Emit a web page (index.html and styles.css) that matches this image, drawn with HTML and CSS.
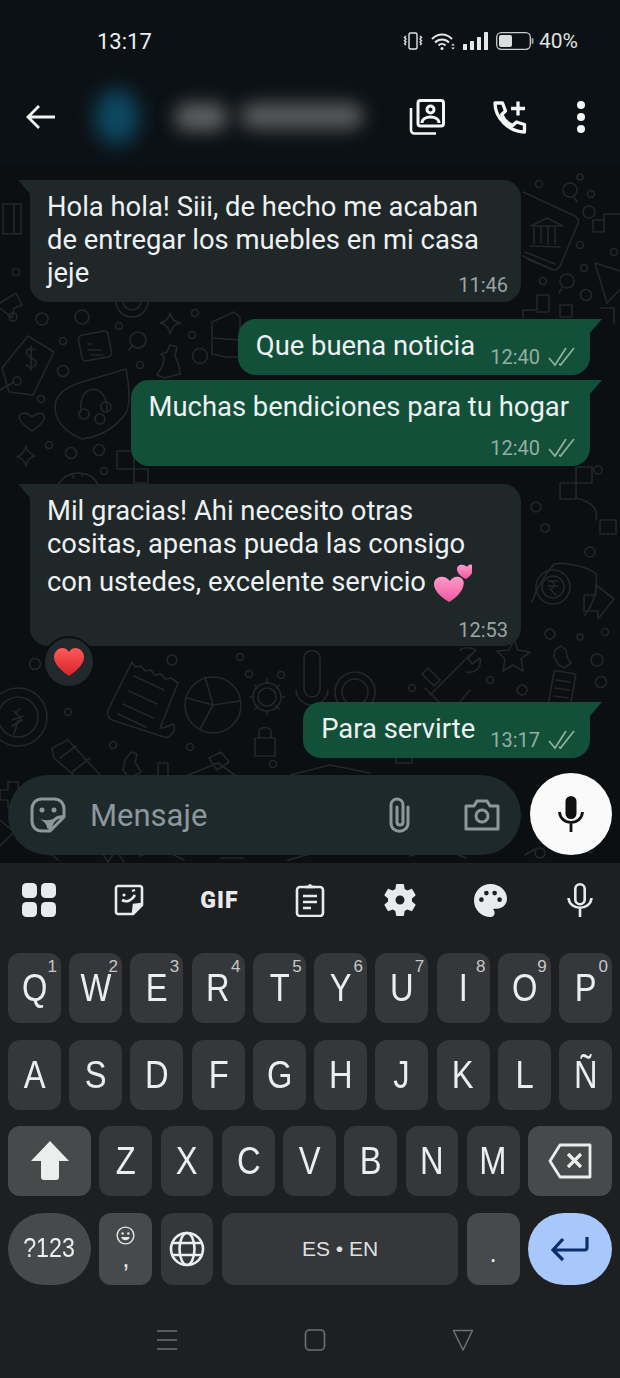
FILE: index.html
```html
<!DOCTYPE html>
<html lang="es">
<head>
    <meta charset="UTF-8">
    <meta name="viewport" content="width=device-width, initial-scale=1.0">
    <title>WhatsApp chat</title>
    <link rel="stylesheet" href="styles.css">
</head>
<body>
<div class="phone">
    <header class="top">
        <div class="status">
            <span class="clock">13:17</span>
            <div class="status-icons">
                <svg class="ic-vib" viewBox="0 0 20 18" fill="none" stroke="#e4e6e7" stroke-width="1.4"><rect x="6" y="1" width="8" height="16" rx="1.5"/><path d="M3 4l-1.500 1.500 1.500 1.500-1.500 1.500 1.500 1.500-1.500 1.500 1.500 1.500M17 4l1.500 1.500-1.500 1.500 1.500 1.500-1.500 1.500 1.500 1.500-1.500 1.500"/></svg>
                <svg class="ic-wifi" viewBox="0 0 25 17" fill="none" stroke="#e4e6e7" stroke-width="2"><path d="M1 6c6-6 14-6 20 0M4 9.500c4-4 10-4 14 0M7.500 12.500c2-2 5-2 7 0"/><circle cx="11" cy="15.500" r="1.500" fill="#e4e6e7" stroke="none"/><path d="M22 10.500l1.800 2h-3.600zM22 16.500l1.800-2h-3.600z" fill="#e4e6e7" stroke="none"/></svg>
                <svg class="ic-signal" viewBox="0 0 25 18" fill="#e4e6e7"><rect x="0" y="12" width="4" height="6" rx=".6"/><rect x="7" y="9" width="4" height="9" rx=".6"/><rect x="14" y="5" width="4" height="13" rx=".6"/><rect x="21" y="0" width="4" height="18" rx=".6"/></svg>
                <svg class="ic-batt" viewBox="0 0 38 18"><rect x=".7" y=".7" width="33.600" height="16.600" rx="4.500" fill="none" stroke="#c9cbcc" stroke-width="1.300"/><rect x="3" y="3" width="13" height="12" rx="2" fill="#dcdddd"/><rect x="35.500" y="6" width="2" height="6" rx="1" fill="#9a9c9d"/></svg>
                <span class="pct">40%</span>
            </div>
        </div>
        <div class="appbar">
            <svg class="ic-back" viewBox="0 0 30 26" fill="none" stroke="#f2f3f3" stroke-width="2.800"><path d="M13 2L2 13l11 11M2 13h27"/></svg>
            <div class="avatar"></div>
            <div class="contact-name"><span class="blur-a"></span><span class="blur-b"></span></div>
            <div class="app-actions">
                <svg class="ic-contacts" viewBox="0 0 36 36" fill="none" stroke="#f4f5f5" stroke-width="3"><rect x="9" y="1.500" width="25.500" height="25.500" rx="2.500"/><circle cx="21.500" cy="10.500" r="3.500"/><path d="M13 24c0-8 17-8 17 0"/><path d="M2 9v22c0 2 1.500 3.500 3.500 3.500H27" stroke-width="2.600"/></svg>
                <svg class="ic-addcall" viewBox="0 0 34 34" fill="none" stroke="#f4f5f5" stroke-width="3.300" stroke-linejoin="round"><path d="M2 3h7.500l3 8-3.800 3.500c2 5 6 9 11 11l3.800-3.500 8 2.500V32C16 32 2 18 2 3z"/><path d="M25 1.500v14M18 8.500h14"/></svg>
                <svg class="ic-dots" viewBox="0 0 10 34" fill="#f4f5f5"><circle cx="5" cy="5" r="4"/><circle cx="5" cy="17" r="4"/><circle cx="5" cy="29" r="4"/></svg>
            </div>
        </div>
    </header>

    <main class="chat">
        <svg class="doodles" viewBox="0 165 620 698" fill="none" stroke="#23272a" stroke-width="1.600" stroke-linecap="round" stroke-linejoin="round" aria-hidden="true">
            <!-- left column, top -->
            <path d="M0 303l16-10 6 12-8 3-2 10-12-10"/>
            <path d="M3 204h18v30H3zM14 204v30"/>
            <circle cx="16" cy="272" r="3.500"/><circle cx="13" cy="317" r="4"/><circle cx="42" cy="319" r="6"/><circle cx="82" cy="317" r="7"/><circle cx="119" cy="326" r="3.500"/>
            <circle cx="63" cy="341" r="3.500"/><circle cx="63" cy="371" r="5.500"/><circle cx="140" cy="365" r="3.500"/><circle cx="192" cy="335" r="3.500"/><circle cx="195" cy="313" r="3.500"/><circle cx="200" cy="356" r="7.500"/>
            <circle cx="41" cy="399" r="3.500"/><circle cx="49" cy="445" r="3.500"/><circle cx="71" cy="453" r="5.500"/><circle cx="99" cy="450" r="5.500"/><circle cx="104" cy="471" r="3.500"/>
            <circle cx="132" cy="301" r="16"/><circle cx="132" cy="301" r="9"/>
            <!-- price tag -->
            <path d="M2 368l26-32 26 16-21 43-24-3z"/><circle cx="17" cy="381" r="4"/><path d="M0 390l14-8"/>
            <path d="M35 350c-6-3-10 0-8 4 2 5 9 4 9 9 0 5-6 5-10 2M31 346v24"/>
            <!-- note, magnifier, star, chess piece -->
            <rect x="80" y="333" width="30" height="26" rx="4" transform="rotate(-11 95 346)"/><path d="M88 344h4M88 350h14M91 355h12"/>
            <circle cx="138" cy="340" r="8"/><path d="M132 346l-3 4"/>
            <path d="M170 313c1 6 4 9 11 10-6 1-10 5-11 11-1-6-4-10-10-11 6-1 9-4 10-10z"/>
            <path d="M170 345l7 2-2 9 4 10 1 8-16 4-7-3 6-10 1-8-3-3 6-2z"/>
            <path d="M212 322l22-10 6 5v40l-14 0-14-3zM212 338l28 2"/>
            <!-- headset bubble -->
            <path d="M126 369L82 382C62 388 54 398 55 410c2 14 14 24 27 29 20-2 36-14 44-26 5-10 3-28 0-44z"/>
            <path d="M81 412c-4-30 28-30 26 0"/><circle cx="84" cy="414" r="5"/><circle cx="106" cy="407" r="5"/><circle cx="100" cy="419" r="5"/>
            <path d="M32 431c-12-8-15-14-11-17 4-2 8 0 11 3 3-3 8-5 11-3 3 4 0 10-11 17z"/>
            <path d="M26 446c1 5 3 7 9 10-5 1-8 5-9 10-1-5-4-8-9-9 5-2 8-6 9-11z"/>
            <path d="M117 451h17v18h-17zM134 469h14v14h-14zM134 469v-6"/>
            <path d="M58 485c8-16 34-16 40 0M72 475l2 3M82 473v3"/>
            <!-- right edge -->
            <path d="M523 192l52 24c4 3 4 7 2 10l-17 40c-2 4-6 5-9 3l-28-13"/>
            <path d="M531 226l16-8 16 8zM534 228v16M541 227v16M548 227v17M555 227v17M530 246l30 1M525 252l30 12M527 259l24 10"/>
            <circle cx="570" cy="190" r="7"/><path d="M574 197l3 5"/><circle cx="539" cy="184" r="3.500"/><circle cx="591" cy="194" r="3.500"/><circle cx="589" cy="212" r="6"/><circle cx="580" cy="177" r="3"/>
            <circle cx="580" cy="245" r="3.500"/><circle cx="584" cy="268" r="3.500"/><circle cx="614" cy="252" r="3.500"/>
            <path d="M593 232h11v-18h16M593 232v-12h11"/>
            <circle cx="567" cy="281" r="7"/><path d="M562 288l-3 5"/><circle cx="543" cy="281" r="3.500"/><circle cx="586" cy="295" r="5.500"/>
            <path d="M595 263l25 8M595 263l12 40 13-14"/>
            <path d="M523 310h14v-15h12v17h-12M523 310v8M560 305h12v12h-12zM600 308h14v16"/>
            <path d="M560 483h16v-16h16v16h-16v16h-16z"/>
            <circle cx="536" cy="507" r="5"/><circle cx="598" cy="470" r="4"/><circle cx="545" cy="528" r="4"/><circle cx="590" cy="552" r="5"/>
            <path d="M576 498c16 4 22 10 20 22M600 520h16v14h-16z"/>
            <path d="M532 602c4-12 12-26 22-38 10-2 34 2 42 10 2 14-2 30-12 42"/>
            <circle cx="553" cy="587" r="17"/><circle cx="553" cy="587" r="11"/><path d="M548 581h10M548 586h10M550 581c6 2 6 6 0 8l6 6"/>
            <path d="M596 585l18 14-16 20v-8h-14v-16h12z"/>
            <circle cx="550" cy="634" r="5"/><circle cx="597" cy="660" r="6"/><circle cx="580" cy="637" r="3"/><circle cx="605" cy="632" r="3.500"/>
            <path d="M514 640l4 10 12 2-9 7 2 12-10-6-10 6 2-12-8-8 12-1z"/>
            <path d="M555 650l6-4 5 4 1 7 4 6-7 5-6-4-4-7z"/>
            <rect x="551" y="672" width="22" height="34" rx="2" transform="rotate(10 562 690)"/><path d="M556 680l14 2M555 688l14 2M554 696l14 2"/>
            <circle cx="490" cy="680" r="3.500"/><circle cx="522" cy="690" r="5"/><circle cx="601" cy="682" r="5.500"/>
            <!-- bottom left -->
            <circle cx="18" cy="717" r="29"/><circle cx="18" cy="717" r="20"/><path d="M15 713l5-4M14 711l8 9M12 720l11-4M12 726l10-6M14 734l4-14"/>
            <path d="M132 662l3 5 6-1 4 5 6-1 4 5 6-1 4 5 6-1 7 5-18 45c8 0 14-6 14-3 2 6-4 14-10 12L112 720c-4-2-5-6-4-10z"/>
            <path d="M134 676l30 14M129 691l28 13M123 704l30 14M118 714l28 13"/>
            <circle cx="213" cy="705" r="28"/><path d="M205 677l8 28 27-4M213 705l-26-7M213 705l-13 24"/>
            <circle cx="267" cy="697" r="9"/><circle cx="267" cy="697" r="14"/><path d="M267 679v4M267 711v4M250 697h3M281 697h4M255 685l3 3M276 706l3 3M279 685l-3 3M258 706l-3 3"/>
            <path d="M255 738h20v18h-20zM259 738v-6c0-6 12-6 12 0v6"/>
            <circle cx="35" cy="664" r="5.500"/><circle cx="172" cy="660" r="5"/><circle cx="240" cy="657" r="3.500"/><circle cx="249" cy="674" r="3.500"/><circle cx="281" cy="675" r="3.500"/>
            <circle cx="68" cy="712" r="3.500"/><circle cx="113" cy="745" r="3.500"/><circle cx="190" cy="747" r="3.500"/><circle cx="273" cy="764" r="3.500"/>
            <path d="M52 748l16-8 44 48-12 10-46-40zM60 758l16-12M72 772l18-14"/>
            <path d="M125 760l6-8 6 2-2 8 6 10-12 6-6-8z"/>
            <path d="M158 763h10v14h-10zM209 758l12-6 8 10-12 8zM188 775l30-12 28 20"/>
            <path d="M304 658v30c0 12 16 12 16 0v-30c0-10-16-10-16 0zM296 690c2 20 30 20 32 0M312 705v8"/>
            <circle cx="355" cy="692" r="20"/><circle cx="355" cy="692" r="13"/>
            <path d="M430 695l40-40M425 688l14 14M460 650c6-4 12-2 16 0l-8 8 4 6 8-6c2 8-4 16-14 14M428 668l12 12-6 6-12-12zM470 690l-12 14"/>
            <path d="M396 745h16v18h-16zM290 775l40-10 40 8"/>
            <circle cx="412" cy="688" r="3.500"/><circle cx="480" cy="708" r="3.500"/>
            <path d="M0 790h8v-8h10v8h8v10h-8v8H8v-8H0z"/>
            <path d="M0 820l14 12-14 14M44 848l14 12M100 850l8 12 8-12 8 12M140 856l20-8 24 12M220 858h24M288 860l30-8M410 856l30-8 26 10"/>
            <path d="M540 848a5 5 0 1 0 .1 0M525 855l10-6M546 845l16-8 30 16"/>
        </svg>

        <div class="bubble in first">
            <p class="msg">Hola hola! Siii, de hecho me acaban de entregar los muebles en mi casa</p>
            <div class="tail-line">
                <p class="msg">jeje</p>
                <div class="meta"><span class="time">11:46</span></div>
            </div>
        </div>

        <div class="bubble out gap-lg row">
            <p class="msg">Que buena noticia</p>
            <div class="meta"><span class="time">12:40</span><svg class="checks" viewBox="0 0 27 20" fill="none" stroke="#93aea3" stroke-width="1.700"><path d="M1 11l6 7L18 1M11 17l1.500 1L26 1"/></svg></div>
        </div>

        <div class="bubble out wide">
            <p class="msg">Muchas bendiciones para tu hogar</p>
            <div class="meta"><span class="time">12:40</span><svg class="checks" viewBox="0 0 27 20" fill="none" stroke="#93aea3" stroke-width="1.700"><path d="M1 11l6 7L18 1M11 17l1.500 1L26 1"/></svg></div>
        </div>

        <div class="bubble in thanks">
            <p class="msg">Mil gracias! Ahi necesito otras cositas, apenas pueda las consigo con ustedes, excelente servicio <svg class="hearts" viewBox="0 0 40 42"><defs><linearGradient id="pink" x1="0" y1="0" x2="0" y2="1"><stop offset="0" stop-color="#ff9ccb"/><stop offset="1" stop-color="#f2559f"/></linearGradient></defs><path d="M16 41C6 35 1 29 1 23c0-5 5-8 9-7 3 0 5 2 7 4 2-3 5-5 9-4 4 1 6 5 4 10-2 6-7 11-14 15z" fill="url(#pink)"/><path d="M33 18c-5-2-9-6-9-10 0-3 3-5 6-4 2 0 3 1 4 2 1-2 3-3 5-2v8c-1 2-3 4-6 6z" fill="url(#pink)"/></svg></p>
            <div class="meta"><span class="time">12:53</span></div>
            <div class="reaction"><svg viewBox="0 0 30 28"><defs><linearGradient id="red" x1="0" y1="0" x2="0" y2="1"><stop offset="0" stop-color="#ff5a5a"/><stop offset="1" stop-color="#d9222a"/></linearGradient></defs><path d="M15 28C5 21 0 15 0 9c0-5 4-9 8.500-9C11 0 13.500 1.500 15 4c1.500-2.500 4-4 6.500-4C26 0 30 4 30 9c0 6-5 12-15 19z" fill="url(#red)"/></svg></div>
        </div>

        <div class="bubble out last row">
            <p class="msg">Para servirte</p>
            <div class="meta"><span class="time">13:17</span><svg class="checks" viewBox="0 0 27 20" fill="none" stroke="#93aea3" stroke-width="1.700"><path d="M1 11l6 7L18 1M11 17l1.500 1L26 1"/></svg></div>
        </div>

        <div class="composer">
            <div class="input">
                <svg class="ic-sticker" viewBox="0 0 36 36" fill="none" stroke="#8d989c" stroke-width="3"><path d="M12 2h12c6 0 10 4 10 10v8L20 34h-8C6 34 2 30 2 24V12C2 6 6 2 12 2z"/><path d="M34 20c-8-1-13 4-14 14"/><circle cx="12" cy="13" r="2.500" fill="#8d989c" stroke="none"/><circle cx="24" cy="13" r="2.500" fill="#8d989c" stroke="none"/><path d="M7 21c6 3 14 3 22-1-3 2-5 4-8 6l-2 6-2-1c0-4-4-8-10-10z" fill="#8d989c" stroke="none"/></svg>
                <span class="placeholder">Mensaje</span>
                <svg class="ic-clip" viewBox="0 0 28 36" fill="none" stroke="#8d989c" stroke-width="3" stroke-linecap="round"><path d="M24 10v16c0 11-17 11-17 0V8c0-8 12-8 12 0v17c0 4-6 4-6 0V10"/></svg>
                <svg class="ic-cam" viewBox="0 0 36 32" fill="none" stroke="#8d989c" stroke-width="3"><path d="M2 7h8l3-5h10l3 5h8v23H2z" stroke-linejoin="round"/><circle cx="18" cy="17" r="6"/></svg>
            </div>
            <div class="mic-btn"><svg viewBox="0 0 26 36"><rect x="7.500" y="0" width="11" height="23" rx="5.500" fill="#111"/><path d="M1.500 16c1 14 22 14 23 0M13 28v8" fill="none" stroke="#111" stroke-width="2.800"/></svg></div>
        </div>
    </main>

    <section class="keyboard">
        <div class="toolbar">
            <svg class="tool-grid" viewBox="0 0 34 34" fill="#e9eaeb"><rect width="15" height="15" rx="4.500"/><rect x="19" width="15" height="15" rx="4.500"/><rect y="19" width="15" height="15" rx="4.500"/><rect x="19" y="19" width="15" height="15" rx="4.500"/></svg>
            <svg class="tool-sticker" viewBox="0 0 30 32" fill="none" stroke="#e9eaeb" stroke-width="2.600"><path d="M4 2h22c1 0 2 1 2 2v17l-9 9H4c-1 0-2-1-2-2V4c0-1 1-2 2-2z" stroke-linejoin="round"/><path d="M28 20l-8 1-1 9" fill="#e9eaeb"/><path d="M8 16c5 3 10 0 13-5" stroke-width="2.800"/><circle cx="10" cy="11" r="1.600" fill="#e9eaeb" stroke="none"/><path d="M18 7l3-1" stroke-width="2"/></svg>
            <span class="tool-gif">GIF</span>
            <svg class="tool-clip" viewBox="0 0 30 34" fill="none" stroke="#e9eaeb" stroke-width="2.600"><rect x="2" y="4" width="26" height="29" rx="3"/><path d="M10 4h10M8 13h14M8 19h14M8 25h8"/><circle cx="15" cy="2.800" r="1.800" fill="#e9eaeb" stroke="none"/></svg>
            <svg class="tool-gear" viewBox="2 2 20 20" fill="#e9eaeb"><path d="M19.430 12.980c.04-.32.07-.64.07-.98s-.03-.66-.07-.98l2.110-1.650c.19-.15.24-.42.12-.64l-2-3.460c-.12-.22-.39-.3-.61-.22l-2.490 1c-.52-.4-1.080-.73-1.690-.98l-.38-2.650C14.460 2.180 14.250 2 14 2h-4c-.25 0-.46.18-.49.42l-.38 2.650c-.61.25-1.170.59-1.690.98l-2.490-1c-.23-.09-.49 0-.61.22l-2 3.460c-.13.22-.07.49.12.64l2.110 1.650c-.04.32-.07.65-.07.98s.03.66.07.98l-2.110 1.650c-.19.15-.24.42-.12.64l2 3.460c.12.22.39.3.61.22l2.490-1c.52.4 1.080.73 1.690.98l.38 2.650c.03.24.24.42.49.42h4c.25 0 .46-.18.49-.42l.38-2.650c.61-.25 1.170-.59 1.690-.98l2.490 1c.23.09.49 0 .61-.22l2-3.460c.12-.22.07-.49-.12-.64l-2.110-1.650zM12 14.800c-1.550 0-2.800-1.250-2.800-2.800s1.250-2.800 2.800-2.800 2.800 1.250 2.800 2.800-1.250 2.800-2.800 2.800z" fill-rule="evenodd"/></svg>
            <svg class="tool-palette" viewBox="2 2 20 20"><path d="M12 2C6.490 2 2 6.490 2 12s4.490 10 10 10c1.380 0 2.500-1.120 2.500-2.500 0-.61-.23-1.200-.64-1.670-.08-.1-.13-.21-.13-.33 0-.28.22-.5.5-.5H16c3.310 0 6-2.690 6-6 0-4.960-4.490-9-10-9z" fill="#e9eaeb"/><circle cx="6.500" cy="11.500" r="1.400" fill="#1e1f21"/><circle cx="9.500" cy="7.500" r="1.400" fill="#1e1f21"/><circle cx="14.500" cy="7.500" r="1.400" fill="#1e1f21"/><circle cx="17.500" cy="11.500" r="1.400" fill="#1e1f21"/></svg>
            <svg class="tool-mic" viewBox="0 0 26 34" fill="none" stroke="#e9eaeb" stroke-width="2.600"><rect x="8.300" y="1.300" width="9.400" height="20" rx="4.700"/><path d="M1.500 15c1 13 22 13 23 0M13 26v8"/></svg>
        </div>

        <div class="key-row ten">
            <button class="key"><span class="lbl">Q</span><sup class="num">1</sup></button>
            <button class="key"><span class="lbl">W</span><sup class="num">2</sup></button>
            <button class="key"><span class="lbl">E</span><sup class="num">3</sup></button>
            <button class="key"><span class="lbl">R</span><sup class="num">4</sup></button>
            <button class="key"><span class="lbl">T</span><sup class="num">5</sup></button>
            <button class="key"><span class="lbl">Y</span><sup class="num">6</sup></button>
            <button class="key"><span class="lbl">U</span><sup class="num">7</sup></button>
            <button class="key"><span class="lbl">I</span><sup class="num">8</sup></button>
            <button class="key"><span class="lbl">O</span><sup class="num">9</sup></button>
            <button class="key"><span class="lbl">P</span><sup class="num">0</sup></button>
        </div>
        <div class="key-row ten">
            <button class="key"><span class="lbl">A</span></button>
            <button class="key"><span class="lbl">S</span></button>
            <button class="key"><span class="lbl">D</span></button>
            <button class="key"><span class="lbl">F</span></button>
            <button class="key"><span class="lbl">G</span></button>
            <button class="key"><span class="lbl">H</span></button>
            <button class="key"><span class="lbl">J</span></button>
            <button class="key"><span class="lbl">K</span></button>
            <button class="key"><span class="lbl">L</span></button>
            <button class="key"><span class="lbl">Ñ</span></button>
        </div>
        <div class="key-row third">
            <button class="key mod"><svg class="ic-shift" viewBox="0 0 38 40" fill="#eceded"><path d="M19 0l19 20H28v16c0 2-1 3-3 3H13c-2 0-3-1-3-3V20H0z"/></svg></button>
            <button class="key"><span class="lbl">Z</span></button>
            <button class="key"><span class="lbl">X</span></button>
            <button class="key"><span class="lbl">C</span></button>
            <button class="key"><span class="lbl">V</span></button>
            <button class="key"><span class="lbl">B</span></button>
            <button class="key"><span class="lbl">N</span></button>
            <button class="key"><span class="lbl">M</span></button>
            <button class="key mod"><svg class="ic-del" viewBox="0 0 44 36" fill="none" stroke="#eceded" stroke-width="2.800" stroke-linejoin="round"><path d="M12 2h30v32H12L2 18z"/><path d="M20 11l13 13M33 11L20 24" stroke-width="3.200"/></svg></button>
        </div>
        <div class="key-row bottom">
            <button class="key mod pill"><span class="sym">?123</span></button>
            <button class="key mod comma"><svg class="ic-smile" viewBox="0 0 20 20" fill="none" stroke="#e4e5e5" stroke-width="1.500"><circle cx="10" cy="10" r="8.800"/><circle cx="7" cy="8" r="1.300" fill="#e4e5e5" stroke="none"/><circle cx="13" cy="8" r="1.300" fill="#e4e5e5" stroke="none"/><path d="M5.500 11.500h9c-1 4.500-8 4.500-9 0z" fill="#e4e5e5" stroke="none"/></svg><span class="comma-mark">,</span></button>
            <button class="key"><svg class="ic-globe" viewBox="0 0 36 36" fill="none" stroke="#eceded" stroke-width="2.600"><circle cx="18" cy="18" r="16"/><ellipse cx="18" cy="18" rx="7.500" ry="16"/><path d="M3.500 12h29M3.500 24h29"/></svg></button>
            <button class="key"><span class="space">ES • EN</span></button>
            <button class="key mod"><span class="period">.</span></button>
            <button class="key enter"><svg class="ic-enter" viewBox="0 0 38 26" fill="none" stroke="#0c2d6e" stroke-width="3.200"><path d="M36 1v11c0 1-1 2-2 2H3M12 3L2 14l10 10"/></svg></button>
        </div>

        <nav class="navbar">
            <svg class="nav-ic" viewBox="0 0 24 24" fill="none" stroke="#6e7072" stroke-width="1.500"><path d="M2 3h20M2 12h20M2 21h20"/></svg>
            <svg class="nav-ic" viewBox="0 0 24 24" fill="none" stroke="#6e7072" stroke-width="1.600"><rect x="2.500" y="2" width="19" height="20" rx="4"/></svg>
            <svg class="nav-ic" viewBox="0 0 24 24" fill="none" stroke="#6e7072" stroke-width="1.500"><path d="M2.500 2.500h19L12 22z" stroke-linejoin="round"/></svg>
        </nav>
    </section>
</div>
</body>
</html>
```

FILE: styles.css
```css
* {
    box-sizing: border-box;
}
html, body {
    margin: 0;
    padding: 0;
    background: #1e1f21;
}
.phone {
    width: 620px;
    height: 1378px;
    display: flex;
    flex-direction: column;
    overflow: hidden;
    font-family: Roboto, sans-serif;
}

/* status + app bar */
.top {
    height: 165px;
    background: #0c1115;
    flex: none;
}
.status {
    height: 82px;
    display: flex;
    align-items: center;
    justify-content: space-between;
    padding: 0 42px 0 97px;
    color: #eceeee;
}
.clock {
    font-size: 22px;
}
.status-icons {
    display: flex;
    align-items: center;
}
.ic-vib { width: 20px; height: 18px; margin-right: 8px; }
.ic-wifi { width: 25px; height: 17px; margin-right: 7px; }
.ic-signal { width: 25px; height: 18px; margin-right: 8px; }
.ic-batt { width: 38px; height: 18px; margin-right: 5px; }
.pct { font-size: 21px; color: #dfe1e1; }

.appbar {
    height: 70px;
    display: flex;
    align-items: center;
    padding-left: 26px;
}
.ic-back { width: 30px; height: 26px; flex: none; }
.avatar {
    width: 44px;
    height: 56px;
    margin-left: 39px;
    border-radius: 50%;
    background: #0c4a63;
    filter: blur(10px);
}
.contact-name {
    display: flex;
    margin-left: 36px;
    filter: blur(9px);
}
.blur-a {
    width: 52px;
    height: 28px;
    border-radius: 12px;
    background: #5e6062;
}
.blur-b {
    width: 122px;
    height: 26px;
    margin-left: 14px;
    border-radius: 12px;
    background: #5a5c5e;
}
.app-actions {
    margin-left: 46px;
    display: flex;
    align-items: center;
}
.ic-contacts { width: 36px; height: 36px; }
.ic-addcall { width: 34px; height: 34px; margin-left: 48px; }
.ic-dots { width: 10px; height: 34px; margin-left: 49px; }

/* chat */
.chat {
    position: relative;
    height: 698px;
    flex: none;
    display: flex;
    flex-direction: column;
    padding: 15px 0 8px;
    background: #0b0f12;
}
.doodles {
    position: absolute;
    left: 0;
    top: 0;
    width: 620px;
    height: 698px;
}
.bubble {
    position: relative;
    border-radius: 0 18px 18px 18px;
    color: #eef1f1;
}
.bubble::before {
    content: "";
    position: absolute;
    top: 0;
    width: 13px;
    height: 15px;
}
.in {
    width: 491px;
    margin-left: 30px;
    padding: 11px 13px 4px 17px;
    background: #1f2729;
}
.in > .msg {
    margin-right: 4px;
}
.in::before {
    left: -12px;
    background: #1f2729;
    clip-path: polygon(0 0, 100% 0, 100% 100%);
}
.out {
    align-self: flex-end;
    margin-right: 30px;
    padding: 11px 15px 6px 18px;
    background: #12503a;
    border-radius: 18px 0 18px 18px;
}
.out::before {
    right: -12px;
    background: #12503a;
    clip-path: polygon(0 0, 100% 0, 0 100%);
}
.row {
    display: flex;
    align-items: flex-end;
    gap: 15px;
}
.msg {
    margin: 0;
    font-size: 27.400px;
    line-height: 33px;
    font-weight: 400;
}
.meta {
    display: flex;
    align-items: center;
    justify-content: flex-end;
    height: 24px;
    gap: 8px;
}
.tail-line {
    display: flex;
    justify-content: space-between;
    margin-bottom: 1px;
}
.tail-line .meta {
    margin-top: 16px;
}
.time {
    font-size: 20px;
    color: #9ba4a7;
}
.out .time {
    color: #93aea3;
}
.checks {
    width: 27px;
    height: 20px;
}
.gap-lg {
    margin-top: 17px;
}
.wide {
    margin-top: 5px;
}
.wide .msg {
    margin-right: 6px;
}
.wide .meta {
    margin-top: 12px;
}
.row .msg {
    margin-bottom: 6px;
}
.thanks {
    margin-top: 18px;
}
.thanks .meta {
    margin-top: 15px;
}
.hearts {
    width: 40px;
    height: 42px;
    vertical-align: -12px;
}
.reaction {
    position: absolute;
    left: 15px;
    bottom: -40px;
    width: 48px;
    height: 48px;
    display: flex;
    align-items: center;
    justify-content: center;
    border-radius: 50%;
    background: #22292c;
    box-shadow: 0 0 0 2px #0b0f12;
}
.reaction svg {
    width: 30px;
    height: 28px;
}
.last {
    margin-top: 56px;
}

/* message input */
.composer {
    margin-top: auto;
    display: flex;
    align-items: flex-end;
    padding: 0 8px;
    gap: 9px;
    position: relative;
}
.input {
    width: 513px;
    height: 80px;
    display: flex;
    align-items: center;
    padding-left: 22px;
    border-radius: 40px;
    background: #1e292c;
}
.ic-sticker { width: 36px; height: 36px; flex: none; }
.placeholder {
    margin-left: 24px;
    font-size: 31px;
    color: #8d989c;
}
.ic-clip { width: 28px; height: 36px; margin-left: auto; }
.ic-cam { width: 36px; height: 32px; margin: 0 21px 0 52px; }
.mic-btn {
    width: 82px;
    height: 82px;
    display: flex;
    align-items: center;
    justify-content: center;
    border-radius: 50%;
    background: #fafafa;
}
.mic-btn svg { width: 26px; height: 36px; }

/* keyboard */
.keyboard {
    flex: 1;
    padding: 0 8px;
    background: #1e1f21;
    display: flex;
    flex-direction: column;
}
.toolbar {
    height: 90px;
    flex: none;
    position: relative;
    display: grid;
    grid-template-columns: repeat(7, 90.200px);
    margin-left: -14px;
    padding-bottom: 16px;
    align-items: center;
    justify-items: center;
}
.tool-grid { width: 34px; height: 34px; }
.tool-sticker { width: 30px; height: 32px; }
.tool-gif {
    font-size: 23px;
    font-weight: 900;
    letter-spacing: 1px;
    color: #e9eaeb;
}
.tool-clip { width: 30px; height: 34px; }
.tool-gear { width: 32px; height: 32px; }
.tool-palette { width: 33px; height: 33px; }
.tool-mic { width: 26px; height: 34px; }

.key-row {
    display: grid;
    height: 70px;
    column-gap: 8.400px;
    margin-bottom: 16.500px;
    flex: none;
}
.ten { grid-template-columns: repeat(10, 1fr); }
.third { grid-template-columns: 83px repeat(7, 1fr) 84px; }
.bottom {
    height: 72px;
    margin-bottom: 0;
    grid-template-columns: 83px 52.800px 52.800px 1fr 52.800px 84px;
}
.key {
    position: relative;
    display: flex;
    align-items: center;
    justify-content: center;
    padding: 0;
    border: none;
    border-radius: 12px;
    background: #35373a;
    color: #eceded;
    font-family: "Liberation Sans", Arial, sans-serif;
}
.mod { background: #47494b; }
.pill { border-radius: 36px; }
.enter { background: #a8c7fa; border-radius: 40px; }
.lbl {
    font-size: 38px;
    line-height: 1;
    transform: scaleX(.86);
}
.num {
    position: absolute;
    top: 5px;
    right: 4px;
    font-size: 17px;
    line-height: 1;
    color: #c6c8c8;
}
.sym { font-size: 27px; transform: scaleX(.86); }
.space { font-size: 21px; color: #dfe0e0; }
.period { font-size: 26px; margin-top: 10px; }
.comma { flex-direction: column; }
.ic-smile { width: 19px; height: 19px; margin-top: -4px; }
.comma-mark { font-size: 26px; line-height: 20px; margin-top: 3px; }
.ic-shift { width: 38px; height: 40px; }
.ic-del { width: 44px; height: 36px; }
.ic-globe { width: 36px; height: 36px; }
.ic-enter { width: 38px; height: 26px; }

.navbar {
    flex: 1;
    display: flex;
    justify-content: center;
    gap: 124px;
    padding: 43px 0 0 9px;
}
.nav-ic { width: 24px; height: 24px; }
```
